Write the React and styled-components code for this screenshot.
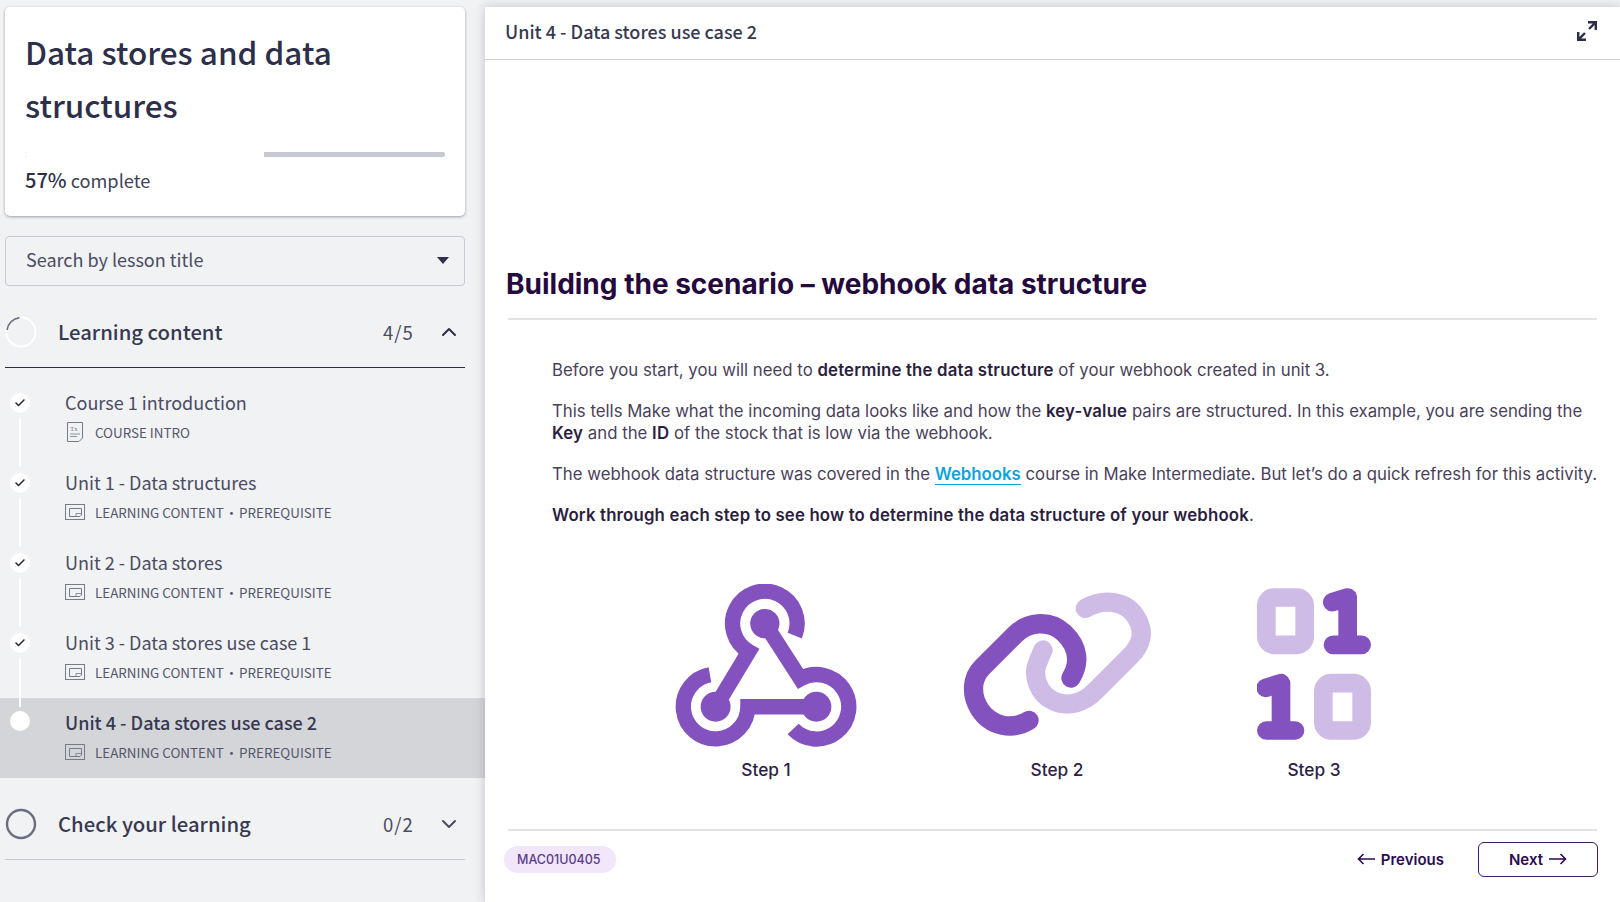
import React from 'react'
import styled, { createGlobalStyle } from 'styled-components'
import { Check, ChevronDown, ChevronUp } from 'lucide-react'

const sans = `'Noto Sans CJK SC', 'Noto Sans', sans-serif`
const inter = `Inter, 'Liberation Sans', sans-serif`
const dark = '#8452bf'
const light = '#cebce6'

const GlobalStyle = createGlobalStyle`
	html, body {
		margin: 0;
		height: 100%;
		overflow: hidden;
		background: #f1f2f4;
	}
	* {
		box-sizing: border-box;
	}
`

const Page = styled.div`
	display: flex;
	height: 902px;
	background: #f1f2f4;
`

const Sidebar = styled.aside`
	flex: 0 0 485px;
	padding: 7px 20px 0 5px;
	font-family: ${sans};
	color: #2d2f4a;
`

const CourseCard = styled.div`
	height: 209px;
	padding: 18px 20px 0;
	background: #fff;
	border-radius: 5px;
	box-shadow: 0 1px 3px rgba(30, 32, 50, 0.4);
`

const CourseTitle = styled.h1`
	margin: 0;
	font-size: 31.5px;
	font-weight: 500;
	line-height: 53px;
	color: #2d2f4a;
`

const ProgressTrack = styled.div`
	height: 5px;
	margin-top: 21px;
	background: #c8cad3;
	border-radius: 2px;
	overflow: hidden;
`

const ProgressFill = styled.div`
	height: 100%;
	background: #fff;
`

const ProgressLabel = styled.div`
	margin-top: 10px;
	font-size: 18.2px;
	line-height: 26px;
	color: #40425a;

	b {
		font-weight: 500;
		font-size: 20px;
		color: #2d2f4a;
	}
`

const SearchSelect = styled.div`
	display: flex;
	align-items: center;
	justify-content: space-between;
	height: 50px;
	margin-top: 20px;
	padding: 0 15px 4px 20px;
	border: 1px solid #c8cad3;
	border-radius: 4px;
	font-size: 18px;
	color: #4a4c62;
`

const Caret = styled.span`
	width: 0;
	height: 0;
	margin-top: 3px;
	border-left: 6px solid transparent;
	border-right: 6px solid transparent;
	border-top: 7px solid #2d2f4a;
`

const SectionHeader = styled.div`
	display: flex;
	align-items: center;
	height: 82px;
	padding: 11px 4px 0 0;
	border-bottom: 1px solid ${props => (props.$open ? '#2d2f4a' : '#c8cad3')};
`

const SectionTitle = styled.div`
	flex: 1;
	margin: 0 0 2px 21px;
	font-size: 20.3px;
	font-weight: 500;
	color: #373950;
`

const SectionCount = styled.div`
	width: 54px;
	font-size: 18.5px;
	letter-spacing: 1px;
	color: #4a4c62;
`

const LessonList = styled.div`
	margin: 10px -20px 0 -5px;
`

const Lesson = styled.div`
	display: flex;
	height: 80px;
	padding: 11px 0 0 10px;
	background: ${props => (props.$current ? '#d4d5d9' : 'transparent')};
`

const Marker = styled.div`
	position: relative;
	flex: 0 0 20px;
	display: flex;
	align-items: center;
	justify-content: center;
	height: 20px;
	margin-top: ${props => (props.$current ? '2px' : '4px')};
	margin-right: 35px;
	border-radius: 50%;
	background: #fff;
	color: #22243a;

	${props =>
		props.$line
			? `&::after {
				content: '';
				position: absolute;
				left: 9px;
				top: 25px;
				width: 2px;
				height: 49px;
				background: rgba(255, 255, 255, 0.9);
			}`
			: ''}
`

const LessonTitle = styled.div`
	font-size: 18px;
	line-height: 26px;
	font-weight: ${props => (props.$current ? 500 : 400)};
	color: ${props => (props.$current ? '#373950' : '#4a4c62')};
`

const LessonMeta = styled.div`
	display: flex;
	align-items: center;
	gap: 10px;
	height: 20px;
	margin-top: 7px;
	font-size: 13.4px;
	color: #54566c;
`

const MetaDot = styled.span`
	margin: 0 -2px;
`

const MetaIcon = styled.svg`
	flex: 0 0 20px;
	display: block;
`

const Main = styled.main`
	flex: 1;
	display: flex;
	flex-direction: column;
	margin-top: 7px;
	background: #fff;
	box-shadow: 0 0 10px rgba(30, 32, 50, 0.22);
`

const TopBar = styled.header`
	display: flex;
	align-items: center;
	justify-content: space-between;
	height: 53px;
	padding: 0 23px 4px 20px;
	border-bottom: 1px solid #cfd0d4;
	font-family: ${sans};
	font-size: 18px;
	font-weight: 500;
	color: #373950;
`

const Content = styled.div`
	flex: 1;
	padding: 0 23px;
	font-family: ${inter};
	color: #4a3f5a;
`

const Heading = styled.h2`
	margin: 204px 0 0 -2px;
	padding-bottom: 14px;
	font-size: 28px;
	line-height: 40px;
	font-weight: 700;
	color: #250a3d;
`

const Rule = styled.hr`
	margin: 0;
	border: 0;
	height: 2px;
	background: #e5e2e3;
`

const Body = styled.div`
	margin: 0 -4px 0 44px;
	padding-top: 39px;
	font-size: 16.8px;
	line-height: 22px;

	b {
		font-weight: 600;
		letter-spacing: 0.17px;
		color: #2c1e3e;
	}
`

const Paragraph = styled.p`
	margin: 0 0 19px;
	white-space: ${props => (props.$nowrap ? 'nowrap' : 'normal')};
`

const CourseLink = styled.a`
	color: #0aa5e0;
	font-weight: 600;
	border-bottom: 1px solid #0aa5e0;
`

const Steps = styled.div`
	display: flex;
	gap: 106px;
	margin: 58px 0 0 167px;
`

const Step = styled.figure`
	display: flex;
	flex-direction: column;
	align-items: center;
	margin: 0;
`

const StepArt = styled.div`
	display: flex;
	align-items: center;
	height: 163px;
	padding-bottom: ${props => (props.$lift ? '3px' : '0')};
`

const StepLabel = styled.figcaption`
	margin-top: 12px;
	font-size: 17.3px;
	line-height: 22px;
	font-weight: 500;
	color: #2f1f48;
`

const Footer = styled.footer`
	display: flex;
	align-items: center;
	justify-content: space-between;
	height: 73px;
	margin: 0 23px;
	padding-bottom: 15px;
	border-top: 2px solid #e5e2e3;
	font-family: ${inter};
`

const CodeChip = styled.span`
	margin-left: -4px;
	padding: 0 15px 0 13px;
	height: 27px;
	line-height: 27px;
	border-radius: 14px;
	background: #f1e6fa;
	font-size: 12.5px;
	font-weight: 500;
	color: #5c3d8c;
`

const FooterNav = styled.nav`
	display: flex;
	align-items: center;
	gap: 34px;
	margin-right: -1px;
`

const NavLink = styled.span`
	display: inline-flex;
	align-items: center;
	gap: 6px;
	font-size: 15px;
	font-weight: 600;
	color: #2b0a52;
`

const NextButton = styled(NavLink)`
	justify-content: center;
	width: 120px;
	height: 35px;
	border: 1.5px solid #3d1a6e;
	border-radius: 6px;
`

const LongArrow = ({ left }) => (
	<svg width="18" height="12" viewBox="0 0 18 12" fill="none" stroke="currentColor" strokeWidth="1.6">
		<path d={left ? 'M18 6H1.5M6.5 1L1.5 6L6.5 11' : 'M0 6H16.5M11.5 1L16.5 6L11.5 11'} />
	</svg>
)

const ProgressRing = ({ partial }) => (
	<svg width="32" height="32" viewBox="0 0 32 32" fill="none">
		{partial ? (
			<>
				<circle cx="16" cy="16" r="14.5" stroke="#fff" strokeWidth="2" />
				<path d="M2 14 A14.5 14.5 0 0 1 14.5 1.6" stroke="#6b6e80" strokeWidth="1.6" />
			</>
		) : (
			<circle cx="16" cy="16" r="14" stroke="#6b6e80" strokeWidth="2.4" />
		)}
	</svg>
)

const DocIcon = () => (
	<MetaIcon width="20" height="20" viewBox="0 0 20 20" fill="none" stroke="#777a8a">
		<path d="M2.5 0.5H17.5V16L14 19.5H2.5Z" />
		<path d="M5 12H15M5 14.5H12" strokeWidth="0.8" />
		<text x="5" y="8.5" fontSize="7" fontFamily="Liberation Serif" fill="#777a8a" stroke="none">
			Tx
		</text>
	</MetaIcon>
)

const ContentIcon = () => (
	<MetaIcon width="20" height="16" viewBox="0 0 20 16" fill="none" stroke="#777a8a">
		<rect x="0.5" y="0.5" width="19" height="15" />
		<path d="M4.5 4.5H16.5V11L15 12.5H4.5Z" />
		<path d="M11 12.5V9.5H16" strokeWidth="0.8" />
	</MetaIcon>
)

const ExpandIcon = () => (
	<svg width="20" height="20" viewBox="0 0 20 20" fill="none" stroke="#2d2f4a" strokeWidth="2.4">
		<path d="M11 1.2H18.8V9M18.8 1.2L12 8" />
		<path d="M1.2 11V18.8H9M1.2 18.8L8 12" />
	</svg>
)

const WebhookArt = () => (
	<svg width="182" height="163" viewBox="75 40 547 488" fill="none" stroke={dark} strokeWidth="46">
		<path d="M435 194A97 97 0 1 0 297 242L197 408" />
		<path d="M345 158L452 324A97 97 0 1 1 430 475" />
		<path d="M500 408H294A97 97 0 1 1 180 312" />
		<g fill={dark} stroke="none">
			<circle cx="345" cy="158" r="44" />
			<circle cx="197" cy="408" r="45" />
			<circle cx="500" cy="408" r="45" />
		</g>
	</svg>
)

const LinkArt = () => (
	<svg width="188" height="146" viewBox="68 65 564 438" fill="none" strokeWidth="58" strokeLinecap="round">
		<path
			stroke={light}
			d="M435 117C490 85 555 95 585 140C615 185 605 225 570 260L465 365C430 400 385 415 340 395C295 375 275 320 292 280C298 265 302 255 308 242"
		/>
		<path
			stroke={dark}
			d="M266 453C215 485 150 470 118 420C90 375 95 325 125 295L225 195C260 160 325 148 370 190C415 232 420 280 392 326"
		/>
	</svg>
)

const BitZero = ({ x, y }) => (
	<rect x={x} y={y} width="115" height="142" rx="24" stroke={light} strokeWidth="56" />
)

const BitOne = ({ dx, dy }) => (
	<path
		transform={`translate(${dx} ${dy})`}
		stroke={dark}
		strokeWidth="56"
		strokeLinecap="round"
		strokeLinejoin="round"
		d="M308 97L354 83V225M310 225H396"
	/>
)

const BitsArt = () => (
	<svg width="114" height="152" viewBox="82 55 342 455" fill="none">
		<BitZero x={110} y={83} />
		<BitOne dx={0} dy={0} />
		<BitOne dx={-200} dy={257} />
		<BitZero x={281} y={340} />
	</svg>
)

const lessons = [
	{ title: 'Course 1 introduction', meta: 'COURSE INTRO', intro: true },
	{ title: 'Unit 1 - Data structures' },
	{ title: 'Unit 2 - Data stores' },
	{ title: 'Unit 3 - Data stores use case 1' },
	{ title: 'Unit 4 - Data stores use case 2', current: true }
]

const App = () => (
	<Page>
		<GlobalStyle />
		<Sidebar>
			<CourseCard>
				<CourseTitle>Data stores and data structures</CourseTitle>
				<ProgressTrack>
					<ProgressFill style={{ width: '57%' }} />
				</ProgressTrack>
				<ProgressLabel>
					<b>57%</b> complete
				</ProgressLabel>
			</CourseCard>

			<SearchSelect>
				Search by lesson title
				<Caret />
			</SearchSelect>

			<SectionHeader $open>
				<ProgressRing partial />
				<SectionTitle>Learning content</SectionTitle>
				<SectionCount>4/5</SectionCount>
				<ChevronUp size={24} strokeWidth={2} color="#2d2f4a" />
			</SectionHeader>

			<LessonList>
				{lessons.map(lesson => (
					<Lesson key={lesson.title} $current={lesson.current}>
						<Marker $current={lesson.current} $line={!lesson.current}>
							{!lesson.current && <Check size={12} strokeWidth={3} />}
						</Marker>
						<div>
							<LessonTitle $current={lesson.current}>{lesson.title}</LessonTitle>
							<LessonMeta>
								{lesson.intro ? <DocIcon /> : <ContentIcon />}
								{lesson.intro ? (
									<span>COURSE INTRO</span>
								) : (
									<span>
										LEARNING CONTENT <MetaDot>·</MetaDot> PREREQUISITE
									</span>
								)}
							</LessonMeta>
						</div>
					</Lesson>
				))}
			</LessonList>

			<SectionHeader>
				<ProgressRing />
				<SectionTitle>Check your learning</SectionTitle>
				<SectionCount>0/2</SectionCount>
				<ChevronDown size={24} strokeWidth={2} color="#4a4c62" />
			</SectionHeader>
		</Sidebar>

		<Main>
			<TopBar>
				Unit 4 - Data stores use case 2
				<ExpandIcon />
			</TopBar>

			<Content>
				<Heading>Building the scenario – webhook data structure</Heading>
				<Rule />
				<Body>
					<Paragraph>
						Before you start, you will need to <b>determine the data structure</b> of your webhook
						created in unit 3.
					</Paragraph>
					<Paragraph>
						This tells Make what the incoming data looks like and how the <b>key-value</b> pairs are
						structured. In this example, you are sending the <b>Key</b> and the <b>ID</b> of the
						stock that is low via the webhook.
					</Paragraph>
					<Paragraph $nowrap>
						The webhook data structure was covered in the <CourseLink>Webhooks</CourseLink> course in
						Make Intermediate. But let’s do a quick refresh for this activity.
					</Paragraph>
					<Paragraph>
						<b>Work through each step to see how to determine the data structure of your webhook</b>.
					</Paragraph>
				</Body>
				<Steps>
					<Step>
						<StepArt>
							<WebhookArt />
						</StepArt>
						<StepLabel>Step 1</StepLabel>
					</Step>
					<Step>
						<StepArt $lift>
							<LinkArt />
						</StepArt>
						<StepLabel>Step 2</StepLabel>
					</Step>
					<Step>
						<StepArt $lift>
							<BitsArt />
						</StepArt>
						<StepLabel>Step 3</StepLabel>
					</Step>
				</Steps>
			</Content>

			<Footer>
				<CodeChip>MAC01U0405</CodeChip>
				<FooterNav>
					<NavLink>
						<LongArrow left />
						Previous
					</NavLink>
					<NextButton>
						Next
						<LongArrow />
					</NextButton>
				</FooterNav>
			</Footer>
		</Main>
	</Page>
)

export default App
